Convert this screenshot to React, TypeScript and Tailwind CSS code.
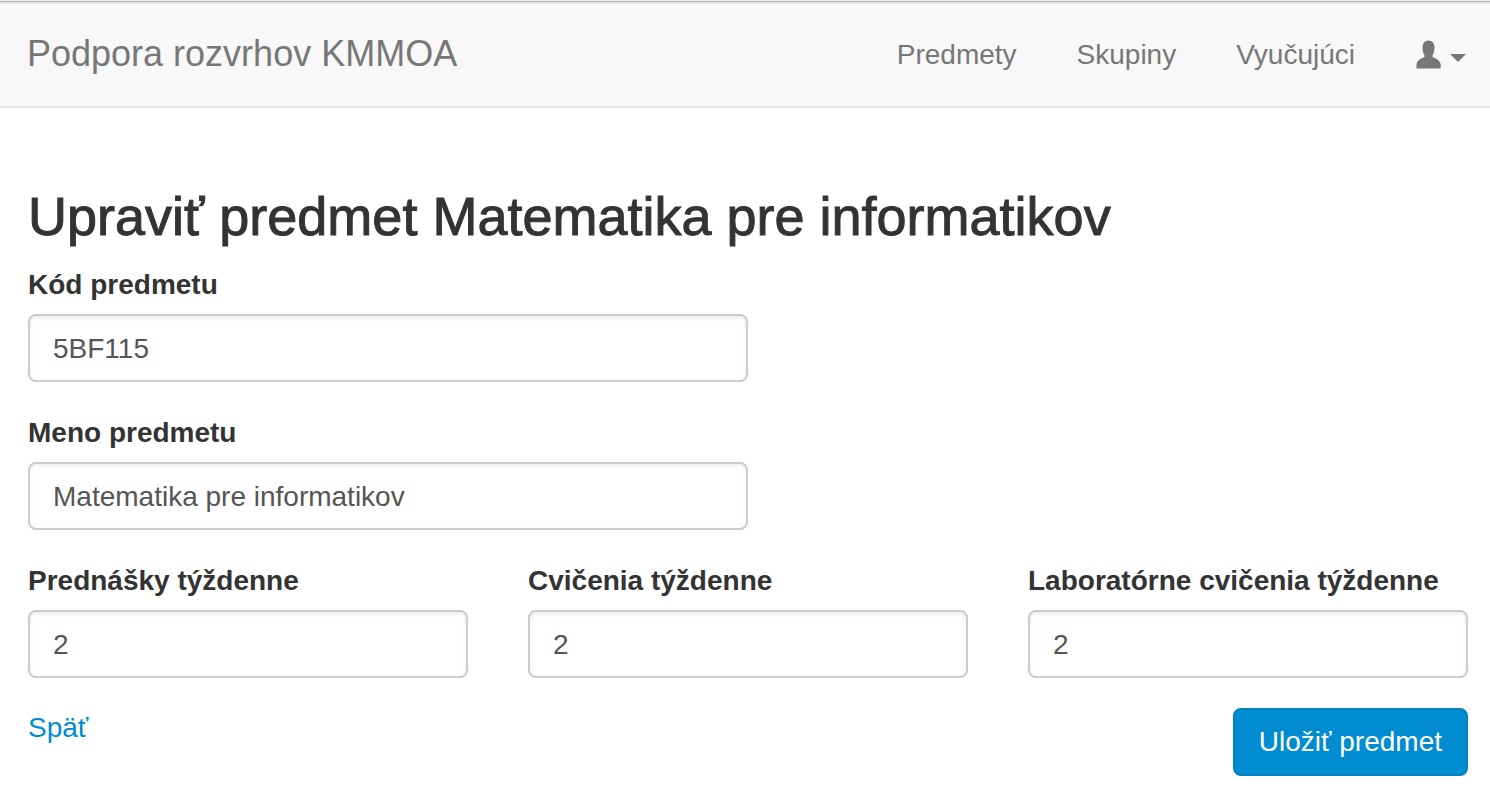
import React from "react";

const inputClass =
  "block h-[68px] w-full rounded-lg border-2 border-[#cccccc] bg-white px-[23px] pt-[2px] text-[28px] text-[#555555] shadow-[inset_0_2px_4px_rgba(0,0,0,0.075)] outline-none";

type FieldProps = { id: string; label: string; value: string };

function Field({ id, label, value }: FieldProps) {
  return (
    <div>
      <label htmlFor={id} className="mb-[9px] block whitespace-nowrap text-[28px] font-bold leading-10">
        {label}
      </label>
      <input id={id} type="text" defaultValue={value} className={inputClass} />
    </div>
  );
}

export default function App() {
  return (
    <div className="min-h-screen bg-white font-['Liberation_Sans',Arial,sans-serif] text-[28px] leading-10 text-[#333333]">
      <div className="h-[2px] border-b border-[#b1b1b1] bg-[#efefef]" />
      <header className="flex h-[106px] items-center justify-between border-y-2 border-[#e7e7e7] bg-[#f8f8f8] pl-[27px] pr-6 text-[#777777]">
        <a href="#" className="pb-[2px] text-[36px]">Podpora rozvrhov KMMOA</a>
        <nav className="flex items-center gap-[60px]">
          <a href="#">Predmety</a>
          <a href="#">Skupiny</a>
          <a href="#">Vyučujúci</a>
          <button type="button" aria-label="Používateľ" className="flex items-center gap-[9px] pb-[2px]">
            <svg width="26" height="29" viewBox="0 0 26 29" fill="currentColor" aria-hidden="true">
              <path d="M13.500 0.500C9.500 0.500 7.500 3.400 7.500 7.400c0 2.400.3 4.400 1 6 .4 1 1 1.700 1 2.500 0 1-.6 1.500-1.500 1.900C4 19.300 1.500 21.700 1.500 25.200v2.600c0 .4.300.7.700.7h22.800c.4 0 .7-.3.7-.7v-2.600c0-3.500-2.700-5.900-6.700-7.400-.9-.4-1.500-.9-1.500-1.900 0-.8.600-1.500 1-2.500.7-1.600 1-3.600 1-6 0-4-2-6.900-6-6.900z" />
            </svg>
            <svg width="16" height="8" viewBox="0 0 16 8" fill="currentColor" className="mt-[7px]" aria-hidden="true">
              <path d="M0 0h16L8 8z" />
            </svg>
          </button>
        </nav>
      </header>
      <main className="pl-7 pr-[22px] pt-20">
        <h1 className="mb-[21px] text-[54px] font-medium leading-[56px] [-webkit-text-stroke:1px_#333333]">
          Upraviť predmet Matematika pre informatikov
        </h1>
        <form onSubmit={(e) => e.preventDefault()}>
          <div className="flex w-1/2 flex-col gap-[31px]">
            <Field id="code" label="Kód predmetu" value="5BF115" />
            <Field id="name" label="Meno predmetu" value="Matematika pre informatikov" />
          </div>
          <div className="mt-[31px] grid grid-cols-3 gap-[60px]">
            <Field id="lectures" label="Prednášky týždenne" value="2" />
            <Field id="exercises" label="Cvičenia týždenne" value="2" />
            <Field id="labs" label="Laboratórne cvičenia týždenne" value="2" />
          </div>
          <div className="mt-[30px] flex items-start justify-between">
            <a href="#" className="text-[#008cd0]">Späť</a>
            <button type="submit" className="h-[68px] rounded-lg border-2 border-[#0082c3] bg-[#008cd0] px-6 text-white">
              Uložiť predmet
            </button>
          </div>
        </form>
      </main>
    </div>
  );
}
